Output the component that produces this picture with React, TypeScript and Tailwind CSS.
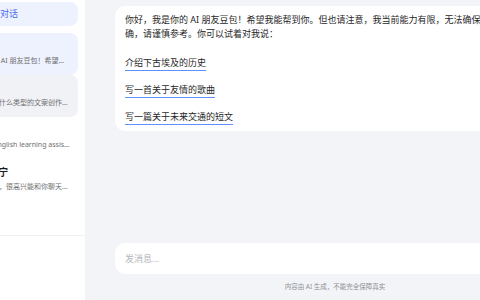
const FONT = { fontFamily: '"Noto Sans", "Noto Sans CJK SC", sans-serif' };

const chats = [
  { title: '豆包', sub: '你好，我是你的 AI 朋友豆包！希望我能帮到你。', bg: 'bg-[#eef2fe]', pl: 'pl-[70px]' },
  { title: '写作助手', sub: '你好，你想要写什么类型的文案创作呢？', bg: 'bg-[#f1f2f5]', pl: 'pl-[70px]' },
  { title: '英语学习', sub: 'You are an English learning assistant.', bg: '', pl: 'pl-[77px]' },
  { title: '恋爱陪聊小宁', sub: '你好，我是小宁，很高兴能和你聊天，今天过得怎么样？', bg: '', pl: 'pl-[70px]' },
];

const prompts = ['介绍下古埃及的历史', '写一首关于友情的歌曲', '写一篇关于未来交通的短文'];

export default function App() {
  return (
    <div className="flex w-[480px] h-[300px] overflow-hidden bg-[#f3f4f8]" style={FONT}>
      <aside className="w-[85px] shrink-0 h-full bg-white overflow-hidden flex flex-col">
        <div className="w-[198px] -ml-[120px] pt-[2px] flex flex-col">
          <div className="h-[24px] rounded-[8px] bg-[#eef2fe] flex items-center pl-[111px] text-[9px] text-[#4b6cf0]">
            新对话
          </div>
          <div className="mt-[7px] flex flex-col">
            {chats.map((c) => (
              <div key={c.sub} className={`h-[42px] rounded-[8px] pr-[7px] pt-[8px] ${c.pl} ${c.bg}`}>
                <div className="h-[12px] leading-[12px] text-[9.7px] font-bold text-[#1d1d1d] whitespace-nowrap">{c.title}</div>
                <div className="mt-[2px] h-[12px] leading-[12px] text-[7px] text-[#6f6f6f] truncate">{c.sub}</div>
              </div>
            ))}
          </div>
        </div>
        <div className="mt-[34px] border-t border-[#f0f1f3]" />
      </aside>

      <main className="w-[500px] shrink-0 h-full flex flex-col pl-[30px] pt-[6px]">
        <div className="w-[406px] rounded-[10px] bg-white px-[10px] pt-[7px] pb-[7px] text-[9px] text-[#1f1f1f]">
          <p className="leading-[13.5px]">
            你好，我是你的 AI 朋友豆包！希望我能帮到你。但也请注意，我当前能力有限，无法确保回答准确，请谨慎参考。你可以试着对我说：
          </p>
          <div className="mt-[16px] flex flex-col gap-[13px]">
            {prompts.map((p) => (
              <div key={p} className="leading-[14px]">
                <span className="border-b-[1.5px] border-[#5f8fff] pb-[1px]">{p}</span>
              </div>
            ))}
          </div>
        </div>

        <div className="mt-auto w-[440px] h-[31px] rounded-[10px] bg-white flex items-center px-[10px] text-[9px] text-[#b4b6bb]">
          发消息...
        </div>
        <div className="h-[26px] flex items-center justify-center pr-[30px] text-[6.5px] text-[#8f9196]">
          内容由 AI 生成，不能完全保障真实
        </div>
      </main>
    </div>
  );
}
